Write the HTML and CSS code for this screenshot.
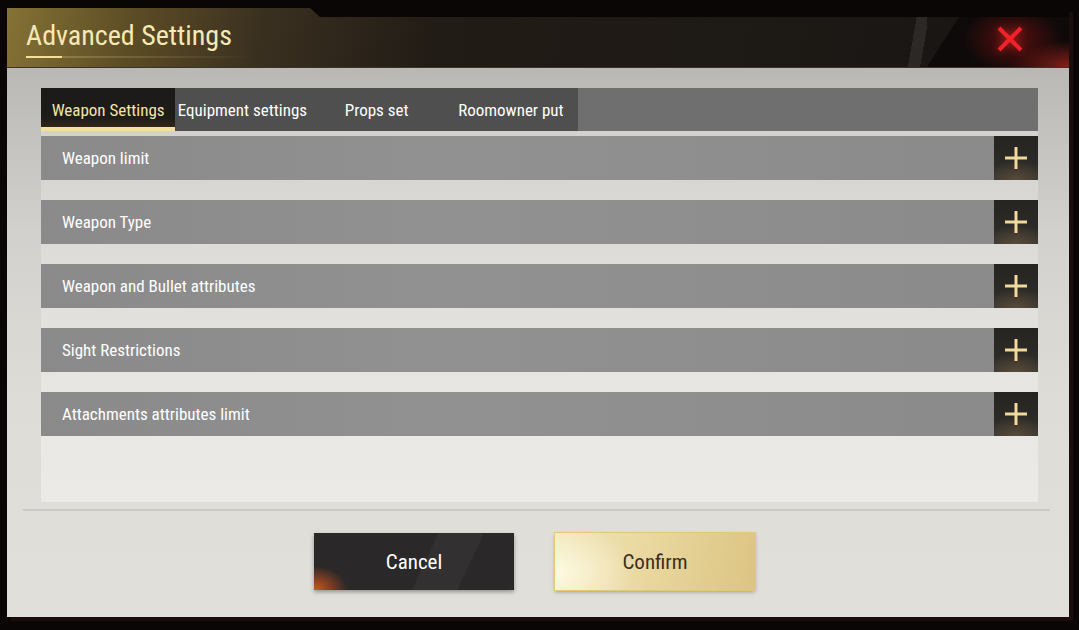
FILE: index.html
```html
<!DOCTYPE html>
<html lang="en">
<head>
    <meta charset="UTF-8">
    <meta name="viewport" content="width=device-width, initial-scale=1.0">
    <title>Advanced Settings</title>
    <link rel="stylesheet" href="styles.css">
</head>
<body>
    <div class="dialog">
        <div class="header">
            <div class="title-wrap">
                <h1 class="title">Advanced Settings</h1>
                <div class="title-line"></div>
            </div>
            <div class="stripe"></div>
            <button class="close-button" aria-label="Close">
                <svg width="28" height="28" viewBox="0 0 28 28">
                    <path d="M3 3 L25 25 M25 3 L3 25" stroke="#ee2228" stroke-width="4" fill="none"/>
                </svg>
            </button>
        </div>

        <div class="body">
            <div class="panel">
                <div class="tabs">
                    <button class="tab active">Weapon Settings</button>
                    <button class="tab">Equipment settings</button>
                    <button class="tab">Props set</button>
                    <button class="tab">Roomowner put</button>
                </div>

                <div class="row">
                    <span class="row-label">Weapon limit</span>
                    <button class="plus-button" aria-label="Expand"><svg width="22" height="22" viewBox="0 0 22 22"><path d="M11 0 V22 M0 11 H22" stroke="#f2d99b" stroke-width="3"/></svg></button>
                </div>
                <div class="row">
                    <span class="row-label">Weapon Type</span>
                    <button class="plus-button" aria-label="Expand"><svg width="22" height="22" viewBox="0 0 22 22"><path d="M11 0 V22 M0 11 H22" stroke="#f2d99b" stroke-width="3"/></svg></button>
                </div>
                <div class="row">
                    <span class="row-label">Weapon and Bullet attributes</span>
                    <button class="plus-button" aria-label="Expand"><svg width="22" height="22" viewBox="0 0 22 22"><path d="M11 0 V22 M0 11 H22" stroke="#f2d99b" stroke-width="3"/></svg></button>
                </div>
                <div class="row">
                    <span class="row-label">Sight Restrictions</span>
                    <button class="plus-button" aria-label="Expand"><svg width="22" height="22" viewBox="0 0 22 22"><path d="M11 0 V22 M0 11 H22" stroke="#f2d99b" stroke-width="3"/></svg></button>
                </div>
                <div class="row">
                    <span class="row-label">Attachments attributes limit</span>
                    <button class="plus-button" aria-label="Expand"><svg width="22" height="22" viewBox="0 0 22 22"><path d="M11 0 V22 M0 11 H22" stroke="#f2d99b" stroke-width="3"/></svg></button>
                </div>
            </div>

            <div class="separator"></div>

            <div class="actions">
                <button class="cancel-button">Cancel</button>
                <button class="confirm-button">Confirm</button>
            </div>
        </div>
    </div>
</body>
</html>
```

FILE: styles.css
```css
body {
    margin: 0;
    height: 630px;
    overflow: hidden;
    background-color: #0b0606;
    font-family: "Roboto Condensed", "DejaVu Sans Condensed", "Liberation Sans Narrow", Roboto, sans-serif;
}
button {
    font-family: inherit;
    border: none;
    cursor: pointer;
}
.dialog {
    margin: 8px 0 0 7px;
    width: 1062px;
    height: 609px;
    display: flex;
    flex-direction: column;
    box-shadow: 4px 4px 0 #1a0d0b;
}

/* header */
.header {
    height: 59px;
    display: flex;
    align-items: stretch;
    background: linear-gradient(100deg, #857235 0%, #5c4c25 12%, #3a3020 24%, #221c16 40%, #1d1915 70%, #181412 100%);
    clip-path: polygon(0 0, 303px 0, 313px 9px, 100% 9px, 100% 100%, 0 100%);
    border-bottom: 1px solid #3c3226;
}
.title-wrap {
    padding: 12px 0 0 19px;
    width: 260px;
}
.title {
    margin: 0;
    font-size: 28px;
    font-weight: normal;
    line-height: 32px;
    color: #f6e9b6;
}
.title-line {
    margin-top: 4px;
    height: 2px;
    width: 230px;
    background: linear-gradient(90deg, #f3df9a 0, #f3df9a 36px, rgba(200, 180, 120, 0.35) 36px, rgba(200, 180, 120, 0) 100%);
}
.stripe {
    margin-left: auto;
    margin-top: 9px;
    width: 26px;
    background: linear-gradient(100deg, transparent 45%, rgba(255, 255, 255, 0.08) 45%, rgba(255, 255, 255, 0.08) 80%, transparent 80%);
}
.close-button {
    margin-top: 3px;
    width: 142px;
    display: flex;
    align-items: center;
    justify-content: center;
    padding-left: 30px;
    background: radial-gradient(ellipse 50px 34px at 86px 28px, rgba(140, 18, 18, 0.6), rgba(60, 10, 10, 0) 100%),
                radial-gradient(ellipse 60px 26px at 142px 56px, rgba(180, 36, 28, 0.75), rgba(60, 10, 10, 0) 100%),
                linear-gradient(180deg, rgba(150, 30, 30, 0.5) 0, rgba(150, 30, 30, 0.5) 1px, transparent 1px),
                #0e0a0a;
    clip-path: polygon(36px 0, 100% 0, 100% 100%, 0 100%);
}
.close-button svg {
    filter: drop-shadow(0 0 4px rgba(255, 40, 40, 0.6));
}

/* body */
.body {
    flex: 1;
    display: flex;
    flex-direction: column;
    background: linear-gradient(180deg, #b9b8b4 0%, #d2d1cd 30%, #dddcd7 60%, #e0dfda 100%);
}
.panel {
    margin: 20px 31px 0 34px;
    height: 414px;
    background: linear-gradient(180deg, #cfcecb 0%, #dddcd9 40%, #e9e8e4 80%, #ebeae6 100%);
}
.tabs {
    display: flex;
    height: 43px;
    background-color: #6f6f6f;
}
.tab {
    width: 134.25px;
    height: 43px;
    padding: 0;
    font-size: 17px;
    color: #ffffff;
    background-color: #4f4f4f;
    white-space: nowrap;
}
.tab.active {
    color: #f4e6a4;
    background: linear-gradient(180deg, #1b1a18 0%, #1e1c19 70%, #3a2c1c 100%);
    box-shadow: inset 0 -4px 0 #f4e29a;
}
.row {
    display: flex;
    align-items: center;
    height: 44px;
    margin-top: 20px;
    background: linear-gradient(90deg, #8a8a8a 0%, #919191 40%, #8e8e8e 70%, #8a8a8a 100%);
}
.tabs + .row {
    margin-top: 5px;
}
.row-label {
    flex: 1;
    padding-left: 21px;
    font-size: 17px;
    color: #ffffff;
}
.plus-button {
    width: 44px;
    height: 44px;
    display: flex;
    align-items: center;
    justify-content: center;
    padding: 0;
    background: radial-gradient(ellipse 30px 20px at 50% 100%, rgba(120, 95, 60, 0.5), rgba(0, 0, 0, 0) 100%),
                linear-gradient(180deg, #262421 0%, #2c2a27 60%, #3a3733 100%);
}
.separator {
    margin: 7px 19px 0 16px;
    height: 2px;
    background-color: #c9c8c3;
}
.actions {
    display: flex;
    justify-content: center;
    gap: 41px;
    margin-top: 22px;
    padding-right: 7px;
}
.cancel-button, .confirm-button {
    width: 200px;
    height: 57px;
    font-size: 21px;
    box-shadow: 0 2px 4px rgba(0, 0, 0, 0.35);
}
.cancel-button {
    color: #ffffff;
    background: radial-gradient(ellipse 34px 24px at 0 100%, rgba(230, 90, 30, 0.9), rgba(120, 30, 20, 0) 100%),
                linear-gradient(115deg, transparent 55%, rgba(255, 255, 255, 0.04) 55%, rgba(255, 255, 255, 0.04) 75%, transparent 75%),
                #2a2828;
}
.confirm-button {
    color: #3b2f22;
    background: radial-gradient(ellipse 80px 50px at 0 70%, rgba(255, 252, 230, 0.9), rgba(255, 250, 220, 0) 100%),
                linear-gradient(100deg, #f1e6bb 0%, #e8d69c 50%, #dcc483 100%);
    box-shadow: 0 0 0 1px #e6c679, 0 2px 4px rgba(0, 0, 0, 0.3);
}
```
